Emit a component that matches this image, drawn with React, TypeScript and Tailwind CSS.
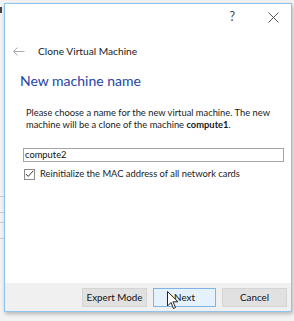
import React from "react";

function Cursor() {
  return (
    <svg width="12" height="19" viewBox="0 0 12 19" className="absolute left-[167px] top-[291px]">
      <path d="M0.5 0.5 L0.5 15 L4 11.5 L6.5 17.5 L8.5 16.5 L6 10.8 L11 10.8 Z" fill="#fff" stroke="#222" strokeWidth="1" strokeLinejoin="round" />
    </svg>
  );
}

export default function App() {
  return (
    <div className="relative h-[321px] w-[294px] overflow-hidden bg-[#f3f3f3] font-['Lato',sans-serif]">
      {/* window behind, peeking out on the left */}
      <div className="absolute left-0 top-[196px] h-[1px] w-[4px] bg-[#c8c8c8]" />
      <div className="absolute left-0 top-[212px] h-[1px] w-[4px] bg-[#c8c8c8]" />
      <div className="absolute left-0 top-[222px] h-[1px] w-[4px] bg-[#c8c8c8]" />
      <div className="absolute left-0 top-[238px] h-[1px] w-[4px] bg-[#c8c8c8]" />
      <div className="absolute left-0 top-[7px] h-[6px] w-[2px] bg-[#444]" />

      <div className="ml-[4px] mt-[3px] flex h-[309px] w-[288px] flex-col border border-[#8cc4ee] bg-white shadow-[1px_2px_4px_rgba(0,0,0,0.25)]">
        {/* title bar */}
        <div className="flex h-[26px] items-center justify-end pr-[12px] text-[#444]">
          <span className="mr-[33px] text-[12.5px] leading-none">?</span>
          <svg width="11" height="11" viewBox="0 0 11 11">
            <path d="M0.5 0.5 L10.5 10.5 M10.5 0.5 L0.5 10.5" stroke="#555" strokeWidth="1" />
          </svg>
        </div>

        {/* header */}
        <div className="mt-[14px] flex items-center pl-[8px]">
          <svg width="12" height="9" viewBox="0 0 12 9">
            <path d="M0.5 4.5 H11.5 M4.5 0.5 L0.5 4.5 L4.5 8.5" stroke="#aaa" strokeWidth="1" fill="none" />
          </svg>
          <span className="ml-[13px] text-[10.2px] text-[#222]">Clone Virtual Machine</span>
        </div>

        {/* body */}
        <div className="flex flex-1 flex-col pl-[15px] pr-[7px]">
          <div className="mt-[12px] text-[14px] leading-[20px] text-[#2544a4]">New machine name</div>
          <p className="mt-[16px] whitespace-nowrap pl-[6px] text-[9.35px] leading-[12px] text-[#1a1a1a]">
            Please choose a name for the new virtual machine. The new
            <br />
            machine will be a clone of the machine <b>compute1</b>.
          </p>
          <div className="mt-[17px] ml-[3px] flex h-[14px] items-center border border-[#a5a5a5] pl-[1px] text-[9.35px] text-[#111]">
            compute2
          </div>
          <div className="mt-[6px] ml-[4px] flex items-center">
            <div className="flex h-[11px] w-[11px] items-center justify-center border border-[#8a8a8a]">
              <svg width="9" height="8" viewBox="0 0 9 8">
                <path d="M0.8 4 L3.2 6.4 L8.2 0.8" stroke="#333" strokeWidth="1" fill="none" />
              </svg>
            </div>
            <span className="ml-[5px] text-[9.35px] leading-[12px] text-[#1a1a1a]">Reinitialize the MAC address of all network cards</span>
          </div>
        </div>

        {/* footer */}
        <div className="flex h-[28px] items-center justify-end gap-[6px] bg-[#f0f0f0] pr-[4px]">
          <button className="h-[19px] w-[65px] border border-[#d4d4d4] bg-[#e1e1e1] text-[9.8px] text-[#111]">Expert Mode</button>
          <button className="h-[19px] w-[63px] border border-[#7eb4ea] bg-[#e5f1fb] text-[9.8px] text-[#111]">Next</button>
          <button className="h-[19px] w-[65px] border border-[#d4d4d4] bg-[#e1e1e1] text-[9.8px] text-[#111]">Cancel</button>
        </div>
      </div>
      <Cursor />
    </div>
  );
}
